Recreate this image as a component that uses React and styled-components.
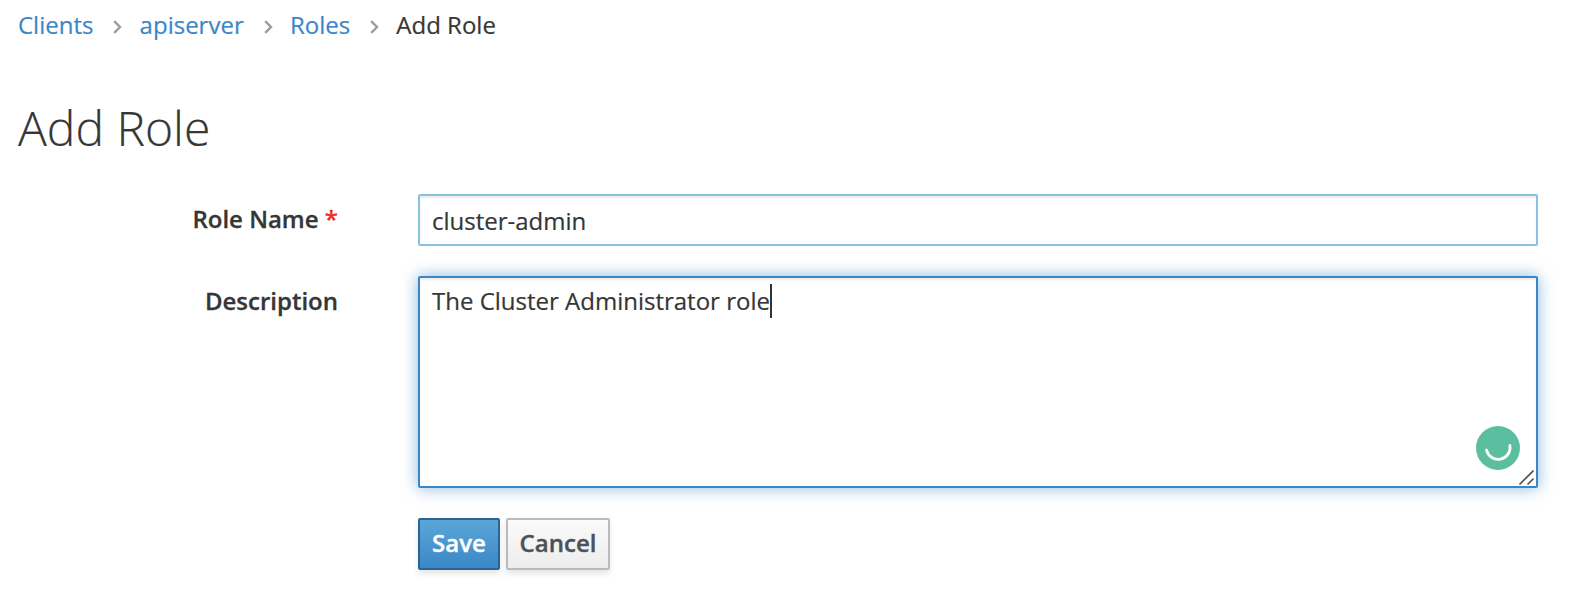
import React from "react";
import styled, { createGlobalStyle } from "styled-components";

const GlobalStyle = createGlobalStyle`
  *, *::before, *::after { box-sizing: border-box; }
  body {
    margin: 0;
    background: #fff;
    color: #363636;
    font-family: "Open Sans", "Noto Sans", sans-serif;
    font-size: 24px;
    line-height: 40px;
    -webkit-text-stroke: 0.2px;
  }
`;

const Page = styled.main`
  width: 1572px;
  height: 600px;
  padding: 5px 34px 0 18px;
  overflow: hidden;
`;

const Breadcrumb = styled.nav`
  display: flex;
  align-items: center;
  height: 40px;
`;

const Crumb = styled.a`
  color: #3a87c8;
  text-decoration: none;
`;

const CurrentCrumb = styled.span`
  color: #363636;
`;

const Separator = styled.svg`
  flex: none;
  width: 9px;
  height: 14px;
  margin: 3px 17.2px 0 20px;
  fill: none;
  stroke: #9c9c9c;
  stroke-width: 2.4;
`;

const Title = styled.h1`
  margin: 57px 0 40px;
  font-size: 48px;
  font-weight: 300;
  line-height: 52px;
`;

const Form = styled.form`
  display: grid;
  grid-template-columns: 320px 1120px;
  column-gap: 80px;
  row-gap: 30px;
`;

const Label = styled.label`
  padding-top: 5px;
  text-align: right;
  font-weight: 600;
  line-height: 40px;
  -webkit-text-stroke: 0.3px;
`;

const Required = styled.span`
  color: #f12d1f;
`;

const Input = styled.input`
  display: block;
  width: 100%;
  height: 52px;
  padding: 3px 12px;
  border: 2px solid #8bc1e5;
  border-radius: 2px;
  outline: none;
  background: #fff;
  color: #363636;
  font: inherit;
  box-shadow: inset 0 2px 2px rgba(3, 3, 3, 0.075);
`;

const TextArea = styled.div`
  position: relative;
  height: 212px;
  padding: 3px 12px;
  border: 2px solid #3a87c8;
  border-radius: 2px;
  background: #fff;
  box-shadow: inset 0 2px 2px rgba(3, 3, 3, 0.075),
    0 0 16px rgba(58, 135, 200, 0.6);
`;

const Line = styled.div`
  display: flex;
  align-items: center;
  height: 40px;
  white-space: pre;
`;

const Caret = styled.span`
  width: 2px;
  height: 34px;
  background: #333;
`;

const AssistantBadge = styled.svg`
  position: absolute;
  right: 16px;
  bottom: 16px;
  width: 44px;
  height: 44px;
`;

const ResizeHandle = styled.svg`
  position: absolute;
  right: 2px;
  bottom: 1px;
  width: 15px;
  height: 15px;
  stroke: #555;
  stroke-width: 1.6;
`;

const Actions = styled.div`
  grid-column: 2;
  display: flex;
  gap: 6px;
`;

const Button = styled.button`
  width: ${(p) => p.$width}px;
  height: 52px;
  padding: 0 0 2px;
  border: 2px solid ${(p) => (p.$primary ? "#2a6496" : "#bababa")};
  border-radius: 2px;
  background: ${(p) =>
    p.$primary
      ? "linear-gradient(#5ba6d8, #3a87c8)"
      : "linear-gradient(#fafafa, #ededed)"};
  color: ${(p) => (p.$primary ? "#fff" : "#4d5258")};
  font: inherit;
  font-weight: 600;
  line-height: 40px;
  -webkit-text-stroke: 0.4px;
  box-shadow: 0 4px 6px rgba(3, 3, 3, 0.1);
`;

const Chevron = () => (
  <Separator viewBox="0 0 9 14" aria-hidden="true">
    <path d="M1.2 1.2 7 7 1.2 12.8" />
  </Separator>
);

export default function App() {
  return (
    <>
      <GlobalStyle />
      <Page>
        <Breadcrumb>
          <Crumb>Clients</Crumb>
          <Chevron />
          <Crumb>apiserver</Crumb>
          <Chevron />
          <Crumb>Roles</Crumb>
          <Chevron />
          <CurrentCrumb>Add Role</CurrentCrumb>
        </Breadcrumb>
        <Title>Add Role</Title>
        <Form onSubmit={(e) => e.preventDefault()}>
          <Label htmlFor="name">
            Role Name <Required>*</Required>
          </Label>
          <Input id="name" defaultValue="cluster-admin" />
          <Label as="div" id="description-label">
            Description
          </Label>
          <TextArea role="textbox" aria-labelledby="description-label">
            <Line>
              The Cluster Administrator role
              <Caret />
            </Line>
            <AssistantBadge viewBox="0 0 44 44">
              <circle cx="22" cy="22" r="22" fill="#5bbf9f" />
              <path
                d="M10.6 24.2A11.9 11.9 0 0 0 33.9 19.4"
                fill="none"
                stroke="#fff"
                strokeWidth="2.8"
                strokeLinecap="round"
              />
            </AssistantBadge>
            <ResizeHandle viewBox="0 0 15 15">
              <path d="M.5 14.5 14.5.5M8.5 14.5l6-6" />
            </ResizeHandle>
          </TextArea>
          <Actions>
            <Button $primary $width={82}>Save</Button>
            <Button $width={104} type="button">Cancel</Button>
          </Actions>
        </Form>
      </Page>
    </>
  );
}
